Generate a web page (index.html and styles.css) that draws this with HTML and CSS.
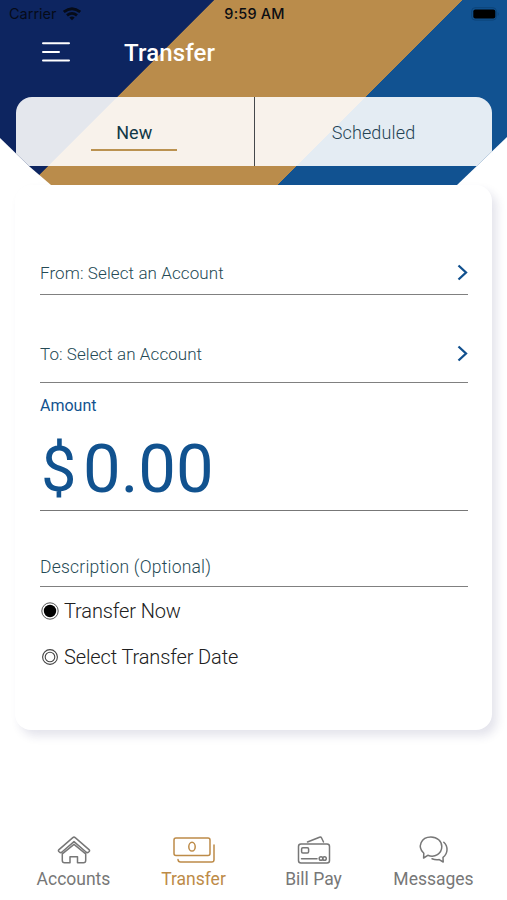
FILE: index.html
```html
<!DOCTYPE html>
<html lang="en">
<head>
<meta charset="utf-8">
<title>Transfer</title>
<link rel="stylesheet" href="styles.css">
</head>
<body>
<div class="screen">
  <header class="header">
    <div class="status">
      <div class="carrier"><span>Carrier</span>
        <svg width="18" height="14" viewBox="0 0 18 14" fill="none" stroke="#060b18" stroke-width="2.8"><path d="M.8 5Q9-1.6 17.2 5M4 8.4Q9 4.3 14 8.4"/><path d="M9 13.2L6.3 10.6Q9 8.6 11.7 10.6Z" fill="#060b18" stroke="none"/></svg>
      </div>
      <span class="clock">9:59 AM</span>
      <svg class="battery" width="29" height="14" viewBox="0 0 29 14"><rect x=".7" y=".7" width="24.6" height="12.4" rx="3.4" fill="none" stroke="#0d4479"/><rect x="2.3" y="2.6" width="22" height="8.8" rx="2" fill="#000"/><path d="M26.7 5v4q2-2 0-4" fill="#0d4479"/></svg>
    </div>
    <div class="titlebar">
      <svg width="28" height="22" viewBox="0 0 28 22" stroke="#fff" stroke-width="2" stroke-linecap="round"><path d="M1 2.2H27M1 11H17M1 19.4H27"/></svg>
      <h1 class="title">Transfer</h1>
    </div>
    <nav class="tabs">
      <div class="tab active"><span>New</span></div>
      <div class="tab"><span>Scheduled</span></div>
    </nav>
  </header>

  <main class="card">
    <div class="field from"><span>From: Select an Account</span><svg class="chevron" width="11" height="17" viewBox="0 0 11 17"><path d="M1.5 1.5L9 8.5L1.5 15.5"/></svg></div>
    <div class="field to"><span>To: Select an Account</span><svg class="chevron" width="11" height="17" viewBox="0 0 11 17"><path d="M1.5 1.5L9 8.5L1.5 15.5"/></svg></div>
    <div class="amount">
      <span class="amount-label">Amount</span>
      <div class="money"><span class="currency">$</span><span class="value">0.00</span></div>
    </div>
    <div class="field description"><span>Description (Optional)</span></div>
    <div class="option"><svg width="20" height="20" viewBox="0 0 20 20"><circle cx="10" cy="10" r="8.2" fill="none" stroke="#555" stroke-width="1"/><circle cx="10" cy="10" r="6.2" fill="#000"/></svg><span>Transfer Now</span></div>
    <div class="option second"><svg width="20" height="20" viewBox="0 0 20 20" fill="none" stroke="#444" stroke-width="1.1"><circle cx="10" cy="10" r="7.4"/><circle cx="10" cy="10" r="4.8"/></svg><span>Select Transfer Date</span></div>
  </main>

  <nav class="bottom">
    <div class="item"><svg width="44" height="30" viewBox="0 0 44 30"><path d="M20.8 1.6Q22 .6 23.2 1.6L37 13.6Q38 14.5 37.2 15.5L36.3 16.3Q35.3 17 34.3 16.2L22 5.6L9.7 16.2Q8.7 17 7.7 16.3L6.8 15.5Q6 14.5 7 13.6Z"/><path d="M10.3 17V24.5Q10.3 26.8 12.6 26.8H18V20.8H25.5V26.8H31.4Q33.7 26.8 33.7 24.5V17M10.3 17.8L22 8.3L33.7 17.8"/></svg><span>Accounts</span></div>
    <div class="item selected"><svg width="44" height="30" viewBox="0 0 44 30"><rect x="2" y="2" width="36" height="17.5" rx="2"/><ellipse cx="20" cy="10.7" rx="3.2" ry="4.4"/><path d="M42 9V23.7Q42 26 39.7 26H8.5Q6.2 26 6 23.5"/></svg><span>Transfer</span></div>
    <div class="item"><svg width="44" height="30" viewBox="0 0 44 30"><rect x="6.5" y="8" width="31" height="19" rx="2.5"/><path d="M15.5 6L27.5 1.2Q29 .8 29.6 2L31.5 6"/><rect x="9.6" y="11.7" width="7" height="5.2" rx="1.2"/><path d="M9.5 22.7H25"/><circle cx="29" cy="22.5" r="1.8"/><circle cx="32.5" cy="22.5" r="1.8"/></svg><span>Bill Pay</span></div>
    <div class="item"><svg width="44" height="30" viewBox="0 0 44 30"><path d="M11.8 17.3C5 11 9 .9 18.9.9C25.2.9 29.8 5.2 29.8 10.6C29.8 17.6 22.8 22.2 15.8 19.3L11.6 22Z"/><path d="M31.8 6.2C36.4 10.4 36 17.6 31 21.4L31.2 26L27.2 23.6Q23.5 24.2 20 22.8"/></svg><span>Messages</span></div>
  </nav>
</div>
</body>
</html>
```
FILE: styles.css
```css
* { box-sizing: border-box; }

body {
  margin: 0;
  background: #fff;
  font-family: Roboto, "Liberation Sans", sans-serif;
}

.screen {
  display: flex;
  flex-direction: column;
  width: 507px;
  height: 900px;
  overflow: hidden;
}

.header {
  position: relative;
  z-index: 1;
  flex: none;
  height: 185px;
  background: linear-gradient(135deg, #0d2560 30.9%, #ba8c4b 31%, #ba8c4b 66.8%, #115291 66.9%);
  clip-path: polygon(0 0, 100% 0, 100% 137px, 457px 100%, 51px 100%, 30px 167px, 0 138px);
}

.status {
  display: grid;
  grid-template-columns: 1fr auto 1fr;
  align-items: center;
  height: 28px;
  padding: 0 7px 0 9px;
  font: 500 14.5px/28px Inter, sans-serif;
  color: #0b0d12;
}

.carrier { display: flex; align-items: center; gap: 6px; font-weight: 400; color: #060b18; }
.clock { font-weight: 500; letter-spacing: .2px; }
.battery { justify-self: end; }

.titlebar {
  display: flex;
  align-items: center;
  gap: 54px;
  height: 48px;
  padding-left: 42px;
}

.title { margin: 2px 0 0; font-size: 24px; font-weight: 500; line-height: 30px; letter-spacing: .15px; color: #fff; }

.tabs {
  display: flex;
  height: 69px;
  margin: 21.4px 15px 0 15.5px;
  border-radius: 16px 16px 0 0;
  background: rgba(255, 255, 255, .89);
}

.tab {
  flex: 1;
  display: flex;
  justify-content: center;
  padding-top: 20.6px;
  font-size: 18px;
  font-weight: 300;
  line-height: 30px;
  letter-spacing: .15px;
  color: #244353;
}

.tab.active { flex: 0 0 239.5px; padding-right: 1px; font-weight: 400; letter-spacing: 0; color: #103846; border-right: 1px solid #45484b; }
.tab.active span { width: 86px; height: 33px; text-align: center; border-bottom: 2px solid #bb9250; }

.card {
  flex: none;
  height: 545px;
  margin: 0 15px;
  padding: 0 24px 0 25px;
  border-radius: 16px;
  background: #fff;
  box-shadow: 5px 6px 10px rgba(45, 50, 110, .13);
}

.field {
  display: flex;
  justify-content: space-between;
  align-items: flex-end;
  border-bottom: 1.5px solid #808080;
  font-size: 17px;
  font-weight: 300;
  line-height: 24px;
  letter-spacing: .1px;
  color: #254a55;
}

.from { height: 110px; padding-bottom: 9px; }
.to { height: 88px; padding-bottom: 16.5px; letter-spacing: .06px; }
.chevron { margin-bottom: 4px; fill: none; stroke: #11508e; stroke-width: 2.3; }

.amount { height: 128px; padding-top: 12px; border-bottom: 1px solid #777; color: #11528f; }
.amount-label { display: block; font-size: 16px; line-height: 22px; }
.money { display: flex; padding: 9px 0 0 1px; font-size: 67px; line-height: 86px; }
.currency { width: 42px; font-size: 63px; line-height: 88px; }

.description { height: 76px; padding-bottom: 7.5px; font-size: 17.5px; letter-spacing: .22px; }

.option {
  display: flex;
  align-items: center;
  gap: 4px;
  height: 47px;
  font-size: 20px;
  font-weight: 300;
  letter-spacing: -.12px;
  color: #202020;
}

.option.second { height: 46px; }

.bottom {
  display: grid;
  grid-template-columns: repeat(4, 120px);
  margin-top: 106px;
  padding-left: 13.5px;
}

.item {
  display: flex;
  flex-direction: column;
  align-items: center;
  font-size: 17.5px;
  line-height: 26px;
  color: #777;
}

.item svg { fill: none; stroke: currentColor; stroke-width: 1.5; stroke-linejoin: round; stroke-linecap: round; }
.selected { color: #bd8b48; }
```
